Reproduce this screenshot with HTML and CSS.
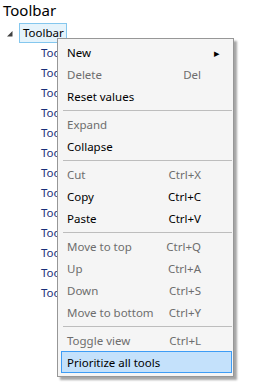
FILE: index.html
```html
<!DOCTYPE html>
<html lang="en">
<head>
    <meta charset="UTF-8">
    <title>Toolbar</title>
    <link rel="stylesheet" href="styles.css">
</head>
<body>
    <h1 class="title">Toolbar</h1>

    <!-- Arvore de ferramentas -->
    <div class="tree">
        <div class="node">
            <svg class="expander" width="6" height="6" viewBox="0 0 6 6"><polygon points="5.5,0 5.5,5.5 0,5.5" fill="#404040"/></svg>
            <span class="node-label selected">Toolbar</span>
        </div>
        <ul class="children">
            <li>Too</li>
            <li>Too</li>
            <li>Too</li>
            <li>Too</li>
            <li>Too</li>
            <li>Too</li>
            <li>Too</li>
            <li>Too</li>
            <li>Too</li>
            <li>Too</li>
            <li>Too</li>
            <li>Too</li>
            <li>Too</li>
        </ul>
    </div>

    <!-- Menu de contexto -->
    <div class="menu">
        <div class="item"><span>New</span><span class="key"></span><span class="arrow">&#9656;</span></div>
        <div class="item disabled"><span>Delete</span><span class="key">Del</span></div>
        <div class="item"><span>Reset values</span><span class="key"></span></div>
        <div class="sep"></div>
        <div class="item disabled"><span>Expand</span><span class="key"></span></div>
        <div class="item"><span>Collapse</span><span class="key"></span></div>
        <div class="sep"></div>
        <div class="item disabled"><span>Cut</span><span class="key">Ctrl+X</span></div>
        <div class="item"><span>Copy</span><span class="key">Ctrl+C</span></div>
        <div class="item"><span>Paste</span><span class="key">Ctrl+V</span></div>
        <div class="sep"></div>
        <div class="item disabled"><span>Move to top</span><span class="key">Ctrl+Q</span></div>
        <div class="item disabled"><span>Up</span><span class="key">Ctrl+A</span></div>
        <div class="item disabled"><span>Down</span><span class="key">Ctrl+S</span></div>
        <div class="item disabled"><span>Move to bottom</span><span class="key">Ctrl+Y</span></div>
        <div class="sep"></div>
        <div class="item disabled"><span>Toggle view</span><span class="key">Ctrl+L</span></div>
        <div class="item active"><span>Prioritize all tools</span><span class="key"></span></div>
    </div>
</body>
</html>
```

FILE: styles.css
```css
* {
    margin: 0;
    padding: 0;
    box-sizing: border-box;
}

body {
    font-family: 'Noto Sans', sans-serif;
    font-size: 12px;
    color: #000;
    background-color: #ffffff;
    width: 269px;
    height: 389px;
    overflow: hidden;
    position: relative;
}

.title {
    font-size: 15px;
    font-weight: normal;
    line-height: 21px;
    height: 23px;
    padding-left: 3px;
}

.node {
    display: flex;
    align-items: center;
    height: 20px;
    padding-left: 7px;
}

.expander {
    display: block;
    margin-top: 2px;
    margin-right: 6px;
}

.node-label {
    font-size: 11.5px;
    line-height: 18px;
    padding: 0 2px 0 3px;
    border: 1px solid #84c7ee;
    background-color: #e5f3fb;
}

.children {
    list-style: none;
    width: 57px;
    overflow: hidden;
}

.children li {
    height: 20px;
    line-height: 20px;
    padding-left: 41px;
    white-space: nowrap;
    font-size: 11.5px;
    color: #1b3079;
}

.menu {
    position: absolute;
    left: 57px;
    top: 38px;
    width: 177px;
    padding: 2px 1px 3px 3px;
    font-size: 11.5px;
    background-color: #f5f5f5;
    border: 1px solid #979797;
    box-shadow: 3px 3px 2px rgba(0, 0, 0, 0.35);
}

.item {
    display: grid;
    grid-template-columns: 1fr auto 30px;
    align-items: center;
    height: 22px;
    padding-left: 5px;
    border: 1px solid transparent;
}

.item .key {
    text-align: right;
}

.item .arrow {
    font-size: 11px;
    text-align: right;
    padding-right: 11px;
}

.item.disabled {
    color: #6d6d6d;
}

.item.active {
    background-color: #c4e1fb;
    border-color: #3d9cf5;
}

.sep {
    height: 6px;
    margin-left: 2px;
    border-top: 2px solid transparent;
}

.sep::after {
    content: '';
    display: block;
    height: 1px;
    background-color: #bdbdbd;
    margin-top: 1px;
}
```
